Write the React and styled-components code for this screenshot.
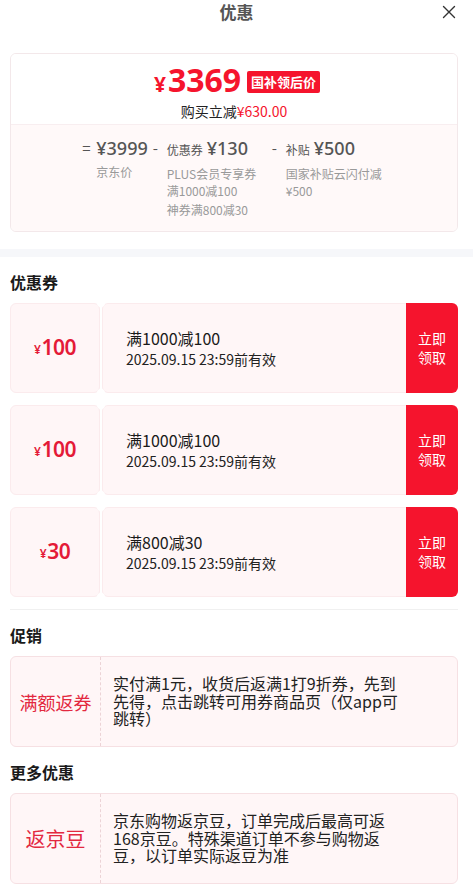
import React from 'react';
import styled, { createGlobalStyle } from 'styled-components';

const RED = '#f5142d';

const GlobalStyle = createGlobalStyle`
	body {
		margin: 0;
		background: #fff;
		font-family: "Noto Sans CJK SC", "Noto Sans", sans-serif;
		color: #1a1a1a;
	}
`;

const coupons = [
	{ amount: '100', rule: '满1000减100', date: '2025.09.15 23:59前有效' },
	{ amount: '100', rule: '满1000减100', date: '2025.09.15 23:59前有效' },
	{ amount: '30', rule: '满800减30', date: '2025.09.15 23:59前有效' },
];

const breakdown = [
	{ op: '=', label: null, value: '¥3999', notes: ['京东价'] },
	{ op: '-', label: '优惠券', value: '¥130', notes: ['PLUS会员专享券满1000减100', '神券满800减30'] },
	{ op: '-', label: '补贴', value: '¥500', notes: ['国家补贴云闪付减¥500'] },
];

const CloseIcon = () => (
	<svg width="14" height="14" viewBox="0 0 14 14" fill="none" stroke="#333" strokeWidth="1.4" strokeLinecap="round">
		<path d="M1.5 1.5l11 11M12.5 1.5l-11 11" />
	</svg>
);

const App = () => (
	<Page>
		<GlobalStyle />
		<Header>
			<span />
			<Title>优惠</Title>
			<CloseButton aria-label="关闭">
				<CloseIcon />
			</CloseButton>
		</Header>

		<SummaryCard>
			<SummaryTop>
				<PriceRow>
					<BigPrice>
						<small>¥</small>3369
					</BigPrice>
					<Badge>国补领后价</Badge>
				</PriceRow>
				<SubLine>
					购买立减<em>¥630.00</em>
				</SubLine>
			</SummaryTop>
			<SummaryBottom>
				{breakdown.map(({ op, label, value, notes }) => (
					<Term key={value}>
						<Op>{op}</Op>
						<TermBody>
							<TermHead>
								{label && <small>{label}</small>}
								{value}
							</TermHead>
							{notes.map((n) => (
								<Note key={n}>{n}</Note>
							))}
						</TermBody>
					</Term>
				))}
			</SummaryBottom>
		</SummaryCard>

		<Band />

		<Section>
			<Heading>优惠券</Heading>
			<CouponList>
				{coupons.map((c, i) => (
					<Coupon key={i}>
						<Stub>
							<small>¥</small>
							{c.amount}
						</Stub>
						<CouponBody>
							<Rule>{c.rule}</Rule>
							<Expire>{c.date}</Expire>
						</CouponBody>
						<GetButton>
							<span>立即</span>
							<span>领取</span>
						</GetButton>
					</Coupon>
				))}
			</CouponList>
			<Divider />

			<Heading>促销</Heading>
			<InfoCard>
				<InfoTag size={18}>满额返券</InfoTag>
				<InfoText>实付满1元，收货后返满1打9折券，先到先得，点击跳转可用券商品页（仅app可跳转）</InfoText>
			</InfoCard>

			<Heading>更多优惠</Heading>
			<InfoCard>
				<InfoTag size={20}>返京豆</InfoTag>
				<InfoText>京东购物返京豆，订单完成后最高可返168京豆。特殊渠道订单不参与购物返豆，以订单实际返豆为准</InfoText>
			</InfoCard>
		</Section>
	</Page>
);

export default App;

const Page = styled.div`
	width: 473px;
	padding-bottom: 10px;
`;

const Header = styled.div`
	display: grid;
	grid-template-columns: 1fr auto 1fr;
	align-items: center;
	height: 24px;
`;

const Title = styled.h2`
	margin: 0;
	font-size: 17px;
	font-weight: 700;
	color: #555;
	line-height: 24px;
`;

const CloseButton = styled.button`
	justify-self: end;
	margin-right: 17px;
	padding: 0;
	border: 0;
	background: none;
	display: flex;
	cursor: pointer;
`;

const SummaryCard = styled.div`
	margin: 29px 15px 0 10px;
	border: 1px solid #f3e8ea;
	border-radius: 6px;
	overflow: hidden;
`;

const SummaryTop = styled.div`
	padding: 9px 0 3px;
	display: flex;
	flex-direction: column;
	align-items: center;
	background: #fff;
	border-bottom: 1px solid #f8eef0;
`;

const PriceRow = styled.div`
	display: flex;
	align-items: center;
	height: 38px;
	margin-left: 6px;
`;

const BigPrice = styled.span`
	font-family: "Noto Sans", "Noto Sans CJK SC", sans-serif;
	font-size: 32px;
	font-weight: 700;
	line-height: 38px;
	color: ${RED};
	small {
		font-size: 21px;
		margin-right: 2px;
	}
`;

const Badge = styled.span`
	margin-left: 6px;
	padding: 0 4px;
	height: 22px;
	line-height: 22px;
	border-radius: 2px;
	background: ${RED};
	color: #fff;
	font-size: 13px;
	font-weight: 700;
`;

const SubLine = styled.div`
	font-size: 14px;
	line-height: 20px;
	color: #222;
	em {
		font-style: normal;
		color: ${RED};
	}
`;

const SummaryBottom = styled.div`
	display: flex;
	justify-content: center;
	gap: 5px;
	padding: 12px 0 13px;
	background: #fff9f9;
`;

const Term = styled.div`
	display: flex;
`;

const Op = styled.span`
	width: 14px;
	font-size: 15px;
	line-height: 22px;
	color: #555;
`;

const TermBody = styled.div`
	display: flex;
	flex-direction: column;
	gap: 2px;
	max-width: 100px;
`;

const TermHead = styled.div`
	font-family: "Noto Sans", "Noto Sans CJK SC", sans-serif;
	font-size: 18px;
	font-weight: 500;
	line-height: 22px;
	color: #555;
	white-space: nowrap;
	margin-bottom: 2px;
	small {
		font-family: "Noto Sans CJK SC", sans-serif;
		font-size: 12px;
		font-weight: 400;
		margin-right: 4px;
	}
`;

const Note = styled.div`
	font-size: 12px;
	line-height: 17px;
	color: #999;
`;

const Band = styled.div`
	height: 8px;
	margin-top: 17px;
	background: #f6f7fa;
`;

const Section = styled.div`
	padding: 0 15px 0 10px;
`;

const Heading = styled.h3`
	margin: 14px 0 10px;
	font-size: 16px;
	font-weight: 700;
	line-height: 22px;
	color: #1a1a1a;
`;

const CouponList = styled.div`
	display: flex;
	flex-direction: column;
	gap: 12px;
`;

const Coupon = styled.div`
	position: relative;
	display: flex;
	gap: 2px;
	height: 90px;
	&::before,
	&::after {
		content: '';
		position: absolute;
		left: 87px;
		width: 8px;
		height: 8px;
		border-radius: 50%;
		background: #fff;
	}
	&::before {
		top: -4px;
	}
	&::after {
		bottom: -4px;
	}
`;

const Stub = styled.div`
	width: 88px;
	display: flex;
	align-items: center;
	justify-content: center;
	padding-bottom: 2px;
	border: 1px solid #fbebed;
	border-radius: 6px;
	background: #fff6f7;
	color: #e41a37;
	font-family: "Noto Sans", sans-serif;
	font-size: 21px;
	font-weight: 600;
	letter-spacing: -0.5px;
	small {
		font-size: 12px;
		margin: 4px 1px 0 0;
	}
`;

const CouponBody = styled.div`
	flex: 1;
	display: flex;
	flex-direction: column;
	justify-content: center;
	padding-left: 23px;
	border: 1px solid #fbebed;
	border-right: 0;
	border-radius: 6px 0 0 6px;
	background: #fff6f7;
`;

const Rule = styled.div`
	font-size: 16px;
	line-height: 22px;
	color: #1a1a1a;
`;

const Expire = styled.div`
	font-size: 14px;
	line-height: 20px;
	color: #222;
`;

const GetButton = styled.button`
	width: 52px;
	margin-left: -2px;
	border: 0;
	padding: 0;
	display: flex;
	flex-direction: column;
	align-items: center;
	justify-content: center;
	border-radius: 0 6px 6px 0;
	background: ${RED};
	color: #fff;
	font-family: inherit;
	font-size: 14px;
	line-height: 19px;
	cursor: pointer;
`;

const Divider = styled.hr`
	margin: 12px 0 0;
	border: 0;
	border-top: 1px solid #f0f0f0;
`;

const InfoCard = styled.div`
	display: flex;
	min-height: 89px;
	border: 1px solid #f6e0e3;
	border-radius: 6px;
	background: #fff6f7;
`;

const InfoTag = styled.div`
	width: 89px;
	flex-shrink: 0;
	display: flex;
	align-items: center;
	justify-content: center;
	border-right: 1px dashed #ecd3d6;
	color: #e3283f;
	font-size: ${({ size }) => size}px;
`;

const InfoText = styled.div`
	align-self: center;
	max-width: 285px;
	padding: 0 12px;
	font-size: 16px;
	line-height: 17.5px;
	color: #222;
`;
